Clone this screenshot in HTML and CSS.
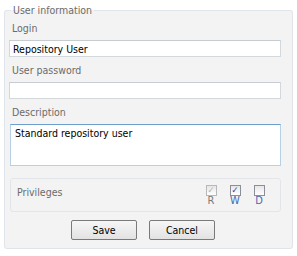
FILE: index.html
```html
<!DOCTYPE html>
<html>
<head>
    <link rel="stylesheet" href="styles.css">
</head>
<body>
    <fieldset class="panel">
        <legend>User information</legend>

        <div class="field-label">Login</div>
        <input class="text-input" type="text" value="Repository User">

        <div class="field-label">User password</div>
        <input class="text-input" type="password" value="">

        <div class="field-label">Description</div>
        <textarea class="text-area">Standard repository user</textarea>

        <div class="privileges">
            <span class="privileges-title">Privileges</span>
            <div class="rights">
                <div class="right disabled">
                    <span class="check checked">&#10003;</span>
                    <span class="right-letter">R</span>
                </div>
                <div class="right">
                    <span class="check checked">&#10003;</span>
                    <span class="right-letter">W</span>
                </div>
                <div class="right">
                    <span class="check"></span>
                    <span class="right-letter">D</span>
                </div>
            </div>
        </div>

        <div class="buttons">
            <button class="btn">Save</button>
            <button class="btn">Cancel</button>
        </div>
    </fieldset>
</body>
</html>
```

FILE: styles.css
```css
body {
    margin: 0;
    background-color: #ffffff;
    font-family: 'DejaVu Sans Condensed', 'DejaVu Sans', sans-serif;
    font-stretch: condensed;
    font-size: 10.5px;
    color: #6b6b6b;
}
.panel {
    margin: 2px 4px 0 4px;
    padding: 0 11px 8px 4px;
    border: 1px solid #dfe5ea;
    border-radius: 3px;
    background-color: #f3f3f3;
}
.panel legend {
    margin-left: 2px;
    padding: 0 2px;
    line-height: 16px;
    color: #6b6b6b;
}
.field-label {
    line-height: 16px;
    margin: 2px 0 4px 3px;
}
.text-input {
    display: block;
    width: 100%;
    height: 17px;
    box-sizing: border-box;
    margin: 0 0 5px 0;
    padding: 0 3px;
    border: 1px solid #d3d8dd;
    border-top-color: #c6ccd2;
    background-color: #ffffff;
    font-family: inherit;
    font-stretch: inherit;
    font-size: inherit;
    color: #000000;
    outline: none;
}
.text-area {
    display: block;
    width: calc(100% - 1px);
    height: 42px;
    box-sizing: border-box;
    margin: 0 0 12px 1px;
    padding: 2px 4px;
    border: 1px solid #b6d0e6;
    border-top-color: #6d9fcd;
    background-color: #ffffff;
    font-family: inherit;
    font-stretch: inherit;
    font-size: inherit;
    color: #000000;
    resize: none;
    outline: none;
}
.privileges {
    display: flex;
    justify-content: space-between;
    height: 34px;
    box-sizing: border-box;
    margin-left: 1px;
    padding: 6px 16px 0 6px;
    border: 1px solid #e2e6ea;
    border-radius: 3px;
}
.privileges-title {
    line-height: 14px;
}
.rights {
    display: flex;
    gap: 14px;
}
.right {
    display: flex;
    flex-direction: column;
    align-items: center;
    width: 10px;
}
.check {
    width: 9px;
    height: 9px;
    border: 1px solid #8a8f99;
    background: linear-gradient(#e6e6e6, #ffffff);
    font-size: 9px;
    line-height: 9px;
    text-align: center;
    color: #2a3f9a;
    font-family: 'DejaVu Sans', sans-serif;
}
.right-letter {
    color: #4a68b0;
    line-height: 10px;
    font-size: 11px;
}
.right.disabled .check {
    border-color: #b8b8b8;
    color: #b0b0b0;
}
.right.disabled .right-letter {
    color: #7a7a7a;
}
.buttons {
    display: flex;
    justify-content: center;
    gap: 12px;
    margin-top: 8px;
    padding-right: 4px;
}
.btn {
    width: 66px;
    height: 20px;
    border: 1px solid #7a7a7a;
    border-radius: 2px;
    background: linear-gradient(#f6f6f6, #e2e2e2);
    font-family: inherit;
    font-stretch: inherit;
    font-size: inherit;
    color: #000000;
    padding: 0;
}
```
